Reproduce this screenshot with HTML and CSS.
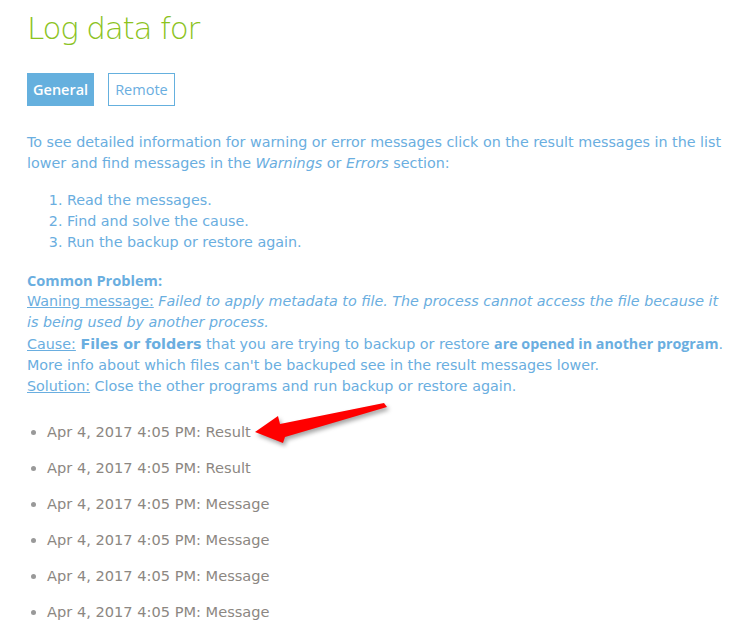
FILE: index.html
```html
<!DOCTYPE html>
<html>
<head>
<meta charset="utf-8">
<link rel="stylesheet" href="styles.css">
</head>
<body>
<div class="page">
  <h1 class="title">Log data for</h1>
  <div class="tabs">
    <span class="tab tab-active">General</span>
    <span class="tab tab-outline">Remote</span>
  </div>
  <p class="intro">To see detailed information for warning or error messages click on the result messages in the list lower and find messages in the <em>Warnings</em> or <em>Errors</em> section:</p>
  <ol class="steps">
    <li>Read the messages.</li>
    <li>Find and solve the cause.</li>
    <li>Run the backup or restore again.</li>
  </ol>
  <div class="problem">
    <div class="problem-head">Common Problem:</div>
    <div><u>Waning message:</u> <em>Failed to apply metadata to file. The process cannot access the file because it is being used by another process.</em></div>
    <div><u>Cause:</u> <b>Files or folders</b> that you are trying to backup or restore <b class="alt-bold">are opened in another program</b>. More info about which files can't be backuped see in the result messages lower.</div>
    <div><u>Solution:</u> Close the other programs and run backup or restore again.</div>
  </div>
  <ul class="log">
    <li>Apr 4, 2017 4:05 PM: Result</li>
    <li>Apr 4, 2017 4:05 PM: Result</li>
    <li>Apr 4, 2017 4:05 PM: Message</li>
    <li>Apr 4, 2017 4:05 PM: Message</li>
    <li>Apr 4, 2017 4:05 PM: Message</li>
    <li>Apr 4, 2017 4:05 PM: Message</li>
  </ul>
  <svg class="arrow" width="140" height="50" viewBox="250 398 140 50">
    <polygon points="255,432 278,416 280,424 384,403 387,407 285,437 283,443" fill="#f00"/>
  </svg>
</div>
</body>
</html>
```
FILE: styles.css
```css
html, body {
  margin: 0;
  padding: 0;
  background: #fff;
}
.page {
  position: relative;
  padding: 6px 0 0 27px;
  font-family: "DejaVu Sans", sans-serif;
  font-size: 14.3px;
  color: #6aaee0;
}
.title {
  margin: 0;
  font-weight: 200;
  font-size: 31px;
  letter-spacing: -1.2px;
  line-height: 44px;
  color: #8cc31f;
  font-family: "DejaVu Sans", sans-serif;
}
.tabs {
  display: flex;
  gap: 14px;
  margin-top: 23px;
}
.tab {
  display: inline-block;
  height: 33px;
  line-height: 33px;
  padding: 0 6px;
  box-sizing: border-box;
  font-family: "Open Sans", sans-serif;
  font-size: 14.5px;
}
.tab-active {
  background: #65b0de;
  color: #fff;
  font-weight: 600;
}
.tab-outline {
  border: 1px solid #65b0de;
  line-height: 31px;
  color: #6aaee0;
}
.intro {
  margin: 26px 0 0 0;
  line-height: 21px;
}
.steps {
  margin: 16px 0 0 0;
  padding-left: 40px;
  line-height: 21px;
}
.problem {
  margin-top: 17px;
  line-height: 21px;
}
.problem-head {
  font-weight: 700;
  font-size: 14.6px;
  font-family: "Open Sans", sans-serif;
}
.problem b {
  font-weight: 700;
}
.problem .alt-bold {
  font-family: "Open Sans", sans-serif;
}
.log {
  margin: 17px 0 0 0;
  padding-left: 20px;
  font-size: 14.6px;
  color: #8c8782;
  line-height: 36px;
  list-style: disc;
}
.log li::marker {
  color: #999;
}
.arrow {
  position: absolute;
  left: 250px;
  top: 398px;
  filter: drop-shadow(2px 3px 2px rgba(0,0,0,0.35));
}
```
